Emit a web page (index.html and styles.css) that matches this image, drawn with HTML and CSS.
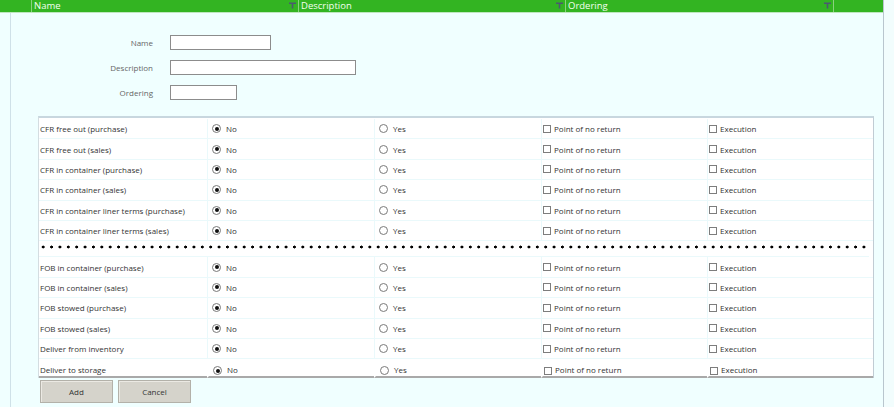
FILE: index.html
```html
<!DOCTYPE html>
<html>
<head>
<meta charset="utf-8">
<link rel="stylesheet" href="styles.css">
</head>
<body>
<div class="grid">
  <div class="hdr">
    <div class="hcell lead"></div>
    <div class="hcell"><span>Name</span><svg class="flt" viewBox="0 0 7 7"><path d="M0 0.5H7V2H4.3V6.5H2.7V2H0Z"/></svg></div>
    <div class="hcell"><span>Description</span><svg class="flt" viewBox="0 0 7 7"><path d="M0 0.5H7V2H4.3V6.5H2.7V2H0Z"/></svg></div>
    <div class="hcell"><span>Ordering</span><svg class="flt" viewBox="0 0 7 7"><path d="M0 0.5H7V2H4.3V6.5H2.7V2H0Z"/></svg></div>
    <div class="hcell"></div>
  </div>
  <div class="content">
    <div class="form">
      <label>Name</label><input class="in-name" type="text">
      <label>Description</label><input class="in-desc" type="text">
      <label>Ordering</label><input class="in-ord" type="text">
    </div>
    <div class="panel">
      <div class="row"><div class="c lbl">CFR free out (purchase)</div><div class="c rad"><i class="radio on"></i>No</div><div class="c rad"><i class="radio"></i>Yes</div><div class="c chk"><i class="box"></i>Point of no return</div><div class="c chk"><i class="box"></i>Execution</div></div>
      <div class="row"><div class="c lbl">CFR free out (sales)</div><div class="c rad"><i class="radio on"></i>No</div><div class="c rad"><i class="radio"></i>Yes</div><div class="c chk"><i class="box"></i>Point of no return</div><div class="c chk"><i class="box"></i>Execution</div></div>
      <div class="row"><div class="c lbl">CFR in container (purchase)</div><div class="c rad"><i class="radio on"></i>No</div><div class="c rad"><i class="radio"></i>Yes</div><div class="c chk"><i class="box"></i>Point of no return</div><div class="c chk"><i class="box"></i>Execution</div></div>
      <div class="row"><div class="c lbl">CFR in container (sales)</div><div class="c rad"><i class="radio on"></i>No</div><div class="c rad"><i class="radio"></i>Yes</div><div class="c chk"><i class="box"></i>Point of no return</div><div class="c chk"><i class="box"></i>Execution</div></div>
      <div class="row"><div class="c lbl">CFR in container liner terms (purchase)</div><div class="c rad"><i class="radio on"></i>No</div><div class="c rad"><i class="radio"></i>Yes</div><div class="c chk"><i class="box"></i>Point of no return</div><div class="c chk"><i class="box"></i>Execution</div></div>
      <div class="row"><div class="c lbl">CFR in container liner terms (sales)</div><div class="c rad"><i class="radio on"></i>No</div><div class="c rad"><i class="radio"></i>Yes</div><div class="c chk"><i class="box"></i>Point of no return</div><div class="c chk"><i class="box"></i>Execution</div></div>
      <div class="dots"></div>
      <div class="row"><div class="c lbl">FOB in container (purchase)</div><div class="c rad"><i class="radio on"></i>No</div><div class="c rad"><i class="radio"></i>Yes</div><div class="c chk"><i class="box"></i>Point of no return</div><div class="c chk"><i class="box"></i>Execution</div></div>
      <div class="row"><div class="c lbl">FOB in container (sales)</div><div class="c rad"><i class="radio on"></i>No</div><div class="c rad"><i class="radio"></i>Yes</div><div class="c chk"><i class="box"></i>Point of no return</div><div class="c chk"><i class="box"></i>Execution</div></div>
      <div class="row"><div class="c lbl">FOB stowed (purchase)</div><div class="c rad"><i class="radio on"></i>No</div><div class="c rad"><i class="radio"></i>Yes</div><div class="c chk"><i class="box"></i>Point of no return</div><div class="c chk"><i class="box"></i>Execution</div></div>
      <div class="row"><div class="c lbl">FOB stowed (sales)</div><div class="c rad"><i class="radio on"></i>No</div><div class="c rad"><i class="radio"></i>Yes</div><div class="c chk"><i class="box"></i>Point of no return</div><div class="c chk"><i class="box"></i>Execution</div></div>
      <div class="row"><div class="c lbl">Deliver from inventory</div><div class="c rad"><i class="radio on"></i>No</div><div class="c rad"><i class="radio"></i>Yes</div><div class="c chk"><i class="box"></i>Point of no return</div><div class="c chk"><i class="box"></i>Execution</div></div>
      <div class="row last"><div class="c lbl">Deliver to storage</div><div class="c rad"><i class="radio on"></i>No</div><div class="c rad"><i class="radio"></i>Yes</div><div class="c chk"><i class="box"></i>Point of no return</div><div class="c chk"><i class="box"></i>Execution</div></div>
    </div>
    <div class="buttons">
      <button class="btn">Add</button>
      <button class="btn">Cancel</button>
    </div>
  </div>
</div>
</body>
</html>
```

FILE: styles.css
```css
* { box-sizing: border-box; }
html, body { margin: 0; padding: 0; }
body {
  width: 894px;
  height: 407px;
  overflow: hidden;
  background: #f2fdfd;
  font-family: "Open Sans", "Noto Sans", sans-serif;
  font-size: 8px;
  color: #333;
}
.grid {
  width: 884px;
  height: 407px;
  border-right: 1px solid #b9c6ce;
  background: #f0ffff;
  display: flex;
  flex-direction: column;
}
.hdr {
  display: grid;
  grid-template-columns: 31px 267px 267px 268px 1fr;
  height: 13px;
  background: #33b422;
  border-bottom: 1px solid #bfe6bf;
  flex: none;
}
.hcell {
  position: relative;
  border-left: 1px solid #8ad27f;
  color: #f4fff0;
  font-size: 9.5px;
  line-height: 11px;
  padding-left: 2px;
  display: flex;
  align-items: flex-start;
  justify-content: space-between;
}
.hcell.lead { border-left: none; }
.hcell span { display: block; }
.flt {
  width: 7px;
  height: 7px;
  margin: 2px 2px 0 0;
  fill: #4b5a70;
}
.content {
  flex: 1;
  margin-left: 10px;
  border-left: 1px solid #cfe1e8;
  padding-left: 27px;
  padding-top: 22px;
}
.form {
  display: grid;
  grid-template-columns: 115px auto;
  column-gap: 17px;
  row-gap: 10px;
  justify-items: start;
  align-items: center;
}
.form label {
  justify-self: end;
  color: #666;
  font-size: 8px;
}
.form input {
  height: 15px;
  border: 1px solid #8c8c8c;
  background: #fff;
  padding: 0;
  margin: 0;
}
.in-name { width: 101px; }
.in-desc { width: 186px; }
.in-ord { width: 67px; }
.panel {
  margin-top: 16px;
  width: 836px;
  background: #fff;
  border-top: 2px solid #c8d7df;
  border-left: 1px solid #d4dde1;
  border-right: 1px solid #c1ccd4;
  padding-top: 1px;
}
.row {
  display: grid;
  grid-template-columns: 168px 167px 167px 166px 1fr;
  height: 20.4px;
  border-bottom: 1px solid #eaf9fb;
}
.c {
  display: flex;
  align-items: center;
  border-left: 1px solid #eaf9fb;
  white-space: nowrap;
  color: #333;
}
.c.lbl { border-left: none; padding-left: 1px; }
.c.rad { padding-left: 4px; }
.c.chk { padding-left: 1px; }
.radio {
  width: 9px;
  height: 9px;
  border: 1px solid #7a7a7a;
  border-radius: 50%;
  background: #fff;
  margin-right: 5px;
  display: inline-flex;
  align-items: center;
  justify-content: center;
}
.radio.on::after {
  content: "";
  width: 4px;
  height: 4px;
  border-radius: 50%;
  background: #111;
}
.box {
  width: 8px;
  height: 8px;
  border: 1px solid #7d7d7d;
  background: #fff;
  margin-right: 3px;
}
.dots {
  height: 16px;
  width: 830px;
  background-image: radial-gradient(circle, #000 1.3px, transparent 1.7px);
  background-size: 8.38px 12px;
  background-repeat: repeat-x;
  background-position: 0 0;
  border-bottom: 1px solid #eaf9fb;
}
.row.last {
  height: 19px;
  border-bottom: none;
}
.row.last .c {
  border-bottom: 2px solid #a9a9a9;
  border-left: 2px solid #fff;
  align-items: flex-end;
  padding-bottom: 1px;
}
.row.last .c.lbl { border-left: none; }
.buttons {
  display: flex;
  gap: 5px;
  margin-top: 2px;
  padding-left: 2px;
}
.btn {
  width: 73px;
  height: 23px;
  background: #d5d3cb;
  border: 1px solid #b3b1a9;
  box-shadow: inset 1px 1px 0 #ebe9e3;
  font-family: "Open Sans", "Noto Sans", sans-serif;
  font-size: 8px;
  color: #333;
  padding: 0;
}
```
